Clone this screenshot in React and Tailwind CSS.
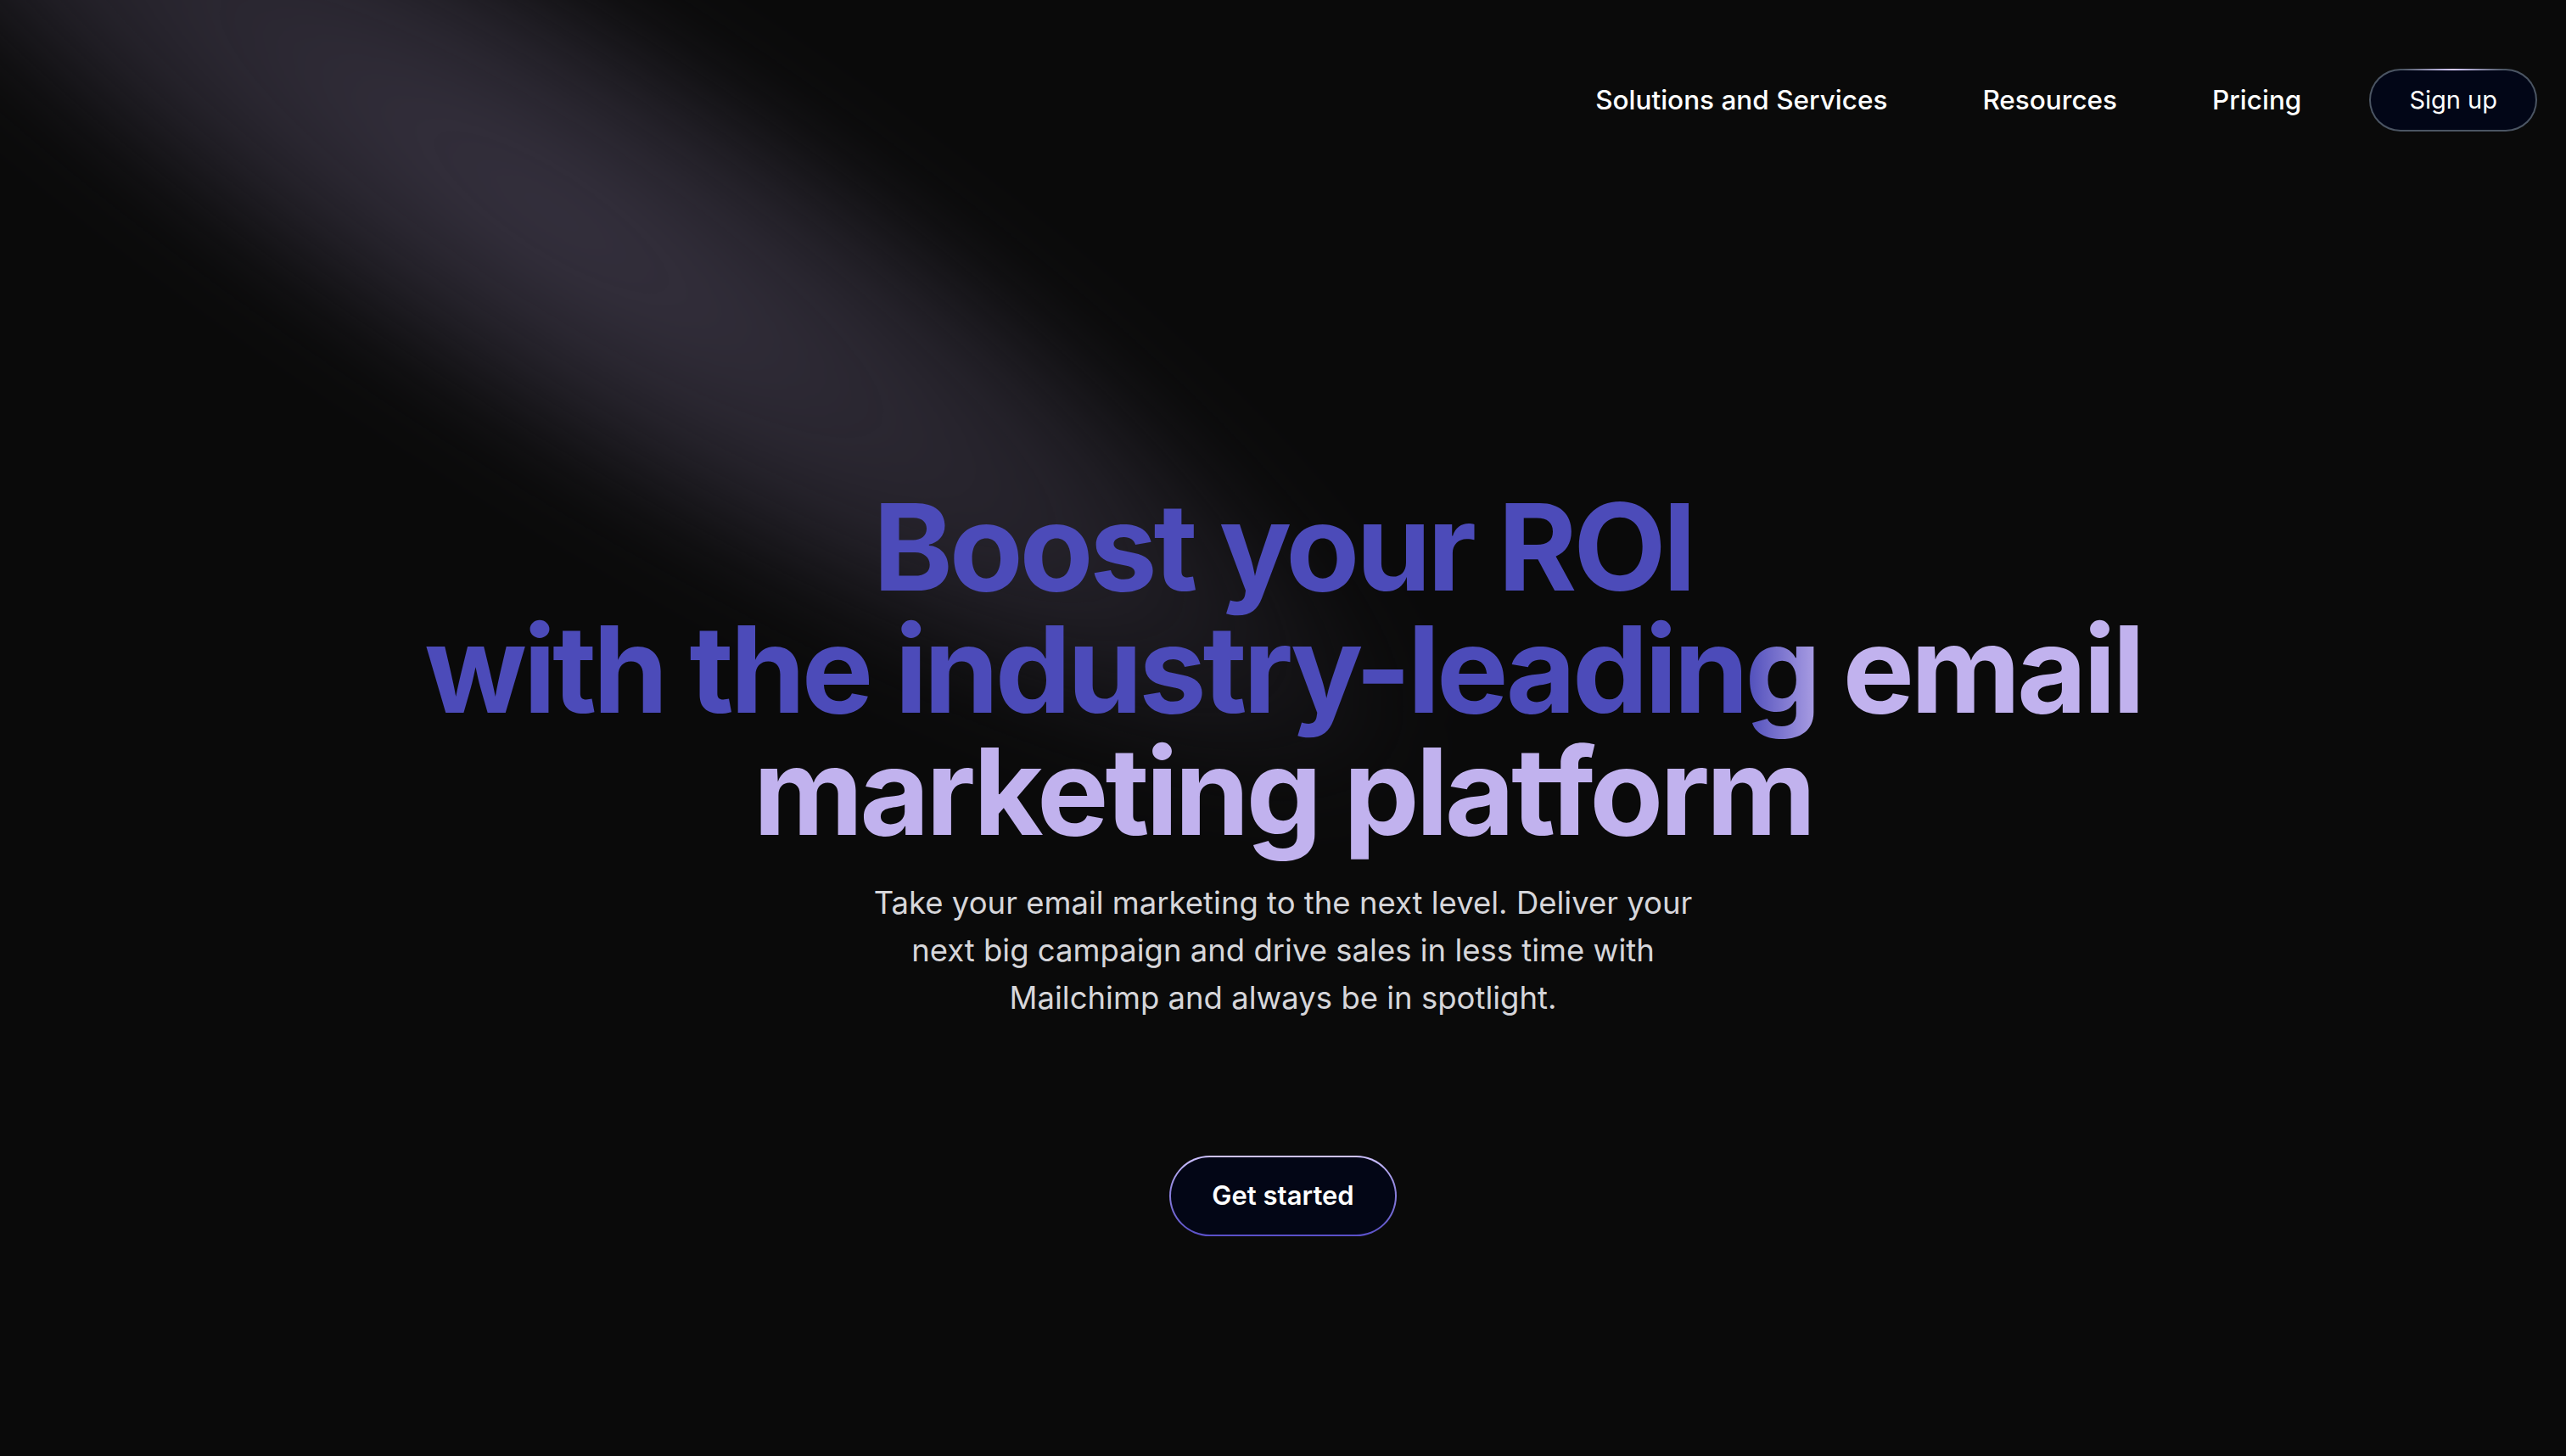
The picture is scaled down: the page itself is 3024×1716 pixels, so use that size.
import React from "react";

const NAV = ["Solutions and Services", "Resources", "Pricing"];

export default function App() {
  return (
    <div className="relative min-h-screen w-full overflow-hidden bg-[#0a0a0a] font-['Inter','Noto_Sans',sans-serif] text-white">
      {/* spotlight beam */}
      <div className="pointer-events-none absolute left-[-550px] top-[-10px] h-[520px] w-[2400px] rotate-[33deg] rounded-full bg-[radial-gradient(ellipse_at_center,rgba(58,53,68,0.95)_0%,rgba(48,44,56,0.65)_45%,rgba(10,10,10,0)_72%)] blur-[50px]" />

      <header className="relative flex items-center justify-end pr-[34px] pt-[81px]">
        <nav className="flex items-center">
          {NAV.map((n) => (
            <a key={n} href="#" className="mr-[112px] text-[31.5px] font-medium text-white last:mr-[80px]">
              {n}
            </a>
          ))}
        </nav>
        <div className="rounded-full bg-[radial-gradient(30%_40%_at_50%_0%,#d9cdff,#4b5563)] p-[2px]">
          <button className="flex h-[70px] items-center rounded-full bg-[#020617] px-[45px] text-[29px] font-normal text-white">
            Sign up
          </button>
        </div>
      </header>

      <main className="relative flex flex-col items-center pt-[417px] pb-[200px]">
        <h1 className="text-center text-[142px] font-bold leading-[144px] tracking-[-0.03em]">
          <span className="bg-[linear-gradient(90deg,#4c4bb9_59.5%,#c1b2ee_62%)] bg-clip-text text-transparent">
            Boost your ROI
            <br />
            with the industry-leading email
            <br />
            marketing platform
          </span>
        </h1>
        <p className="mt-[32px] max-w-[1040px] text-center text-[36.5px] leading-[56px] text-[#d6d6da]">
          Take your email marketing to the next level. Deliver your next big campaign and drive sales in less time with Mailchimp and always be in spotlight.
        </p>
        <div className="mt-[158px] rounded-full bg-[linear-gradient(180deg,#cfc3ff_0%,#8b80dc_45%,#5a50c8_100%)] p-[2px]">
          <button className="flex h-[91px] items-center rounded-full bg-[#030616] px-[48px] text-[31px] font-semibold text-white">
            Get started
          </button>
        </div>
      </main>
    </div>
  );
}
